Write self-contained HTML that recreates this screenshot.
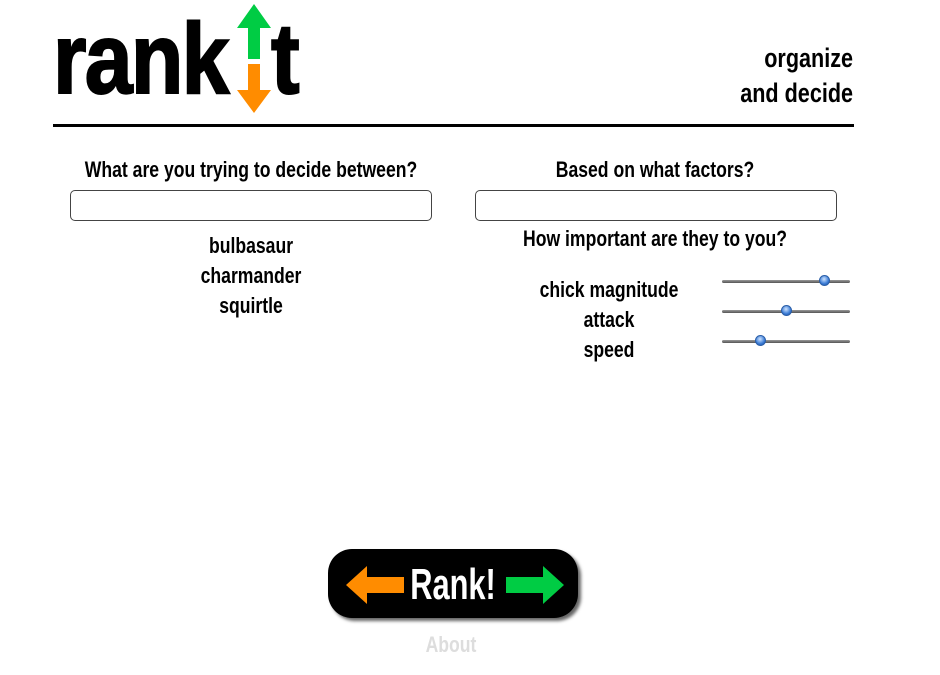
<!DOCTYPE html>
<html><head><style>
body{margin:0;background:#fff;width:940px;height:675px;position:relative;overflow:hidden;font-family:"Liberation Sans",sans-serif;}
.t{position:absolute;font-weight:bold;white-space:nowrap;color:#000;}
.c{transform:translateX(-50%) scaleX(.8);}
.inp{position:absolute;height:29px;border:1px solid #444;border-radius:5px;background:#fff;}
.sl{position:absolute;left:722px;width:128px;height:3px;background:linear-gradient(#999,#555);border-radius:2px;}
.th{position:absolute;width:11px;height:11px;border-radius:50%;top:-5px;background:radial-gradient(circle at 45% 35%,#cfe4ff,#3a7bd5 60%,#1d4f9e);border:1px solid #2a5ea8;box-sizing:border-box;}
.logo{position:absolute;font-weight:bold;font-size:100px;line-height:1;top:9px;transform:scaleX(.86);transform-origin:left;-webkit-text-stroke:2px #000;}
</style></head><body>
<div class="logo" style="left:53px;letter-spacing:-2px;">rank</div>
<svg style="position:absolute;left:236px;top:4px" width="36" height="110">
<polygon points="18,0 35,24 24,24 24,55 12,55 12,24 1,24" fill="#00cc44"/>
<polygon points="12,60 24,60 24,86 35,86 18,109 1,86 12,86" fill="#ff8c00"/>
</svg>
<div class="logo" style="left:271px;">t</div>
<div class="t" style="right:87px;top:41px;font-size:27px;text-align:right;line-height:35px;transform:scaleX(.8);transform-origin:right;">organize<br>and decide</div>
<div style="position:absolute;left:53px;top:124px;width:801px;height:3px;background:#000"></div>
<div class="t c" style="left:251px;top:157px;font-size:22px;">What are you trying to decide between?</div>
<div class="t c" style="left:655px;top:157px;font-size:22px;">Based on what factors?</div>
<div class="inp" style="left:70px;top:190px;width:360px;"></div>
<div class="inp" style="left:475px;top:190px;width:360px;"></div>
<div class="t c" style="left:251px;top:231px;font-size:22px;line-height:30px;text-align:center;">bulbasaur<br>charmander<br>squirtle</div>
<div class="t c" style="left:655px;top:226px;font-size:22px;">How important are they to you?</div>
<div class="t c" style="left:609px;top:275px;font-size:22px;line-height:30px;text-align:center;">chick magnitude<br>attack<br>speed</div>
<div class="sl" style="top:280px"><div class="th" style="left:97px"></div></div>
<div class="sl" style="top:310px"><div class="th" style="left:59px"></div></div>
<div class="sl" style="top:340px"><div class="th" style="left:33px"></div></div>
<div style="position:absolute;left:328px;top:549px;width:250px;height:69px;background:#000;border-radius:24px;box-shadow:3px 3px 3px #666;"></div>
<svg style="position:absolute;left:346px;top:566px" width="58" height="38"><polygon points="0,19 21,0 21,11 58,11 58,27 21,27 21,38" fill="#ff8c00"/></svg>
<svg style="position:absolute;left:506px;top:566px" width="58" height="38"><polygon points="58,19 37,0 37,11 0,11 0,27 37,27 37,38" fill="#00cc44"/></svg>
<div class="t c" style="left:453px;top:560px;font-size:44px;color:#fff;transform:translateX(-50%) scaleX(.7);">Rank!</div>
<div class="t c" style="left:451px;top:632px;font-size:22px;color:#ddd;">About</div>
</body></html>
